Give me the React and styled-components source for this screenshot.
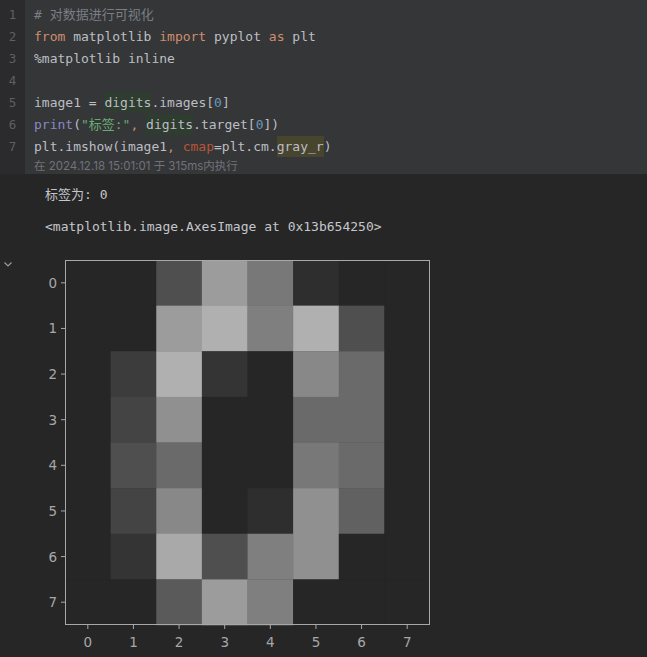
import React from 'react';
import styled, { createGlobalStyle } from 'styled-components';

const digit = [
    [0, 0, 5, 13, 9, 1, 0, 0],
    [0, 0, 13, 15, 10, 15, 5, 0],
    [0, 3, 15, 2, 0, 11, 8, 0],
    [0, 4, 12, 0, 0, 8, 8, 0],
    [0, 5, 8, 0, 0, 9, 8, 0],
    [0, 4, 11, 0, 1, 12, 7, 0],
    [0, 2, 14, 5, 10, 12, 0, 0],
    [0, 0, 6, 13, 10, 0, 0, 0]
];

// grey level per pixel value, read off the rendered gray_r map on the dark theme
const greys = [38, 46, 52, 60, 68, 79, 90, 97, 106, 120, 127, 136, 144, 156, 169, 176];

const Global = createGlobalStyle`
    html, body {
        margin: 0;
        padding: 0;
        background: #262626;
    }
`;

export default function App() {
    return (
        <Page>
            <Global />
            <CodeCell>
                <Gutter>
                    {[1, 2, 3, 4, 5, 6, 7].map((n) => (
                        <LineNumber key={n}>{n}</LineNumber>
                    ))}
                </Gutter>
                <Editor>
                    <CodeLine><Tok kind="comment"># 对数据进行可视化</Tok></CodeLine>
                    <CodeLine>
                        <Tok kind="keyword">from</Tok> matplotlib <Tok kind="keyword">import</Tok> pyplot <Tok kind="keyword">as</Tok> plt
                    </CodeLine>
                    <CodeLine>%matplotlib inline</CodeLine>
                    <CodeLine>{' '}</CodeLine>
                    <CodeLine>
                        image1 = <Mark tone="usage">digits</Mark>.images[<Tok kind="number">0</Tok>]
                    </CodeLine>
                    <CodeLine>
                        <Tok kind="builtin">print</Tok>(<Tok kind="string">"标签:"</Tok><Tok kind="keyword">,</Tok> <Mark tone="usage">digits</Mark>.target[<Tok kind="number">0</Tok>])
                    </CodeLine>
                    <CodeLine>
                        plt.imshow(image1<Tok kind="keyword">,</Tok> <Tok kind="param">cmap</Tok>=plt.cm.<Mark tone="search">gray_r</Mark>)
                    </CodeLine>
                    <Timestamp>在 2024.12.18 15:01:01 于 315ms内执行</Timestamp>
                </Editor>
            </CodeCell>

            <Output>
                <OutText>标签为: 0</OutText>
                <OutText>&lt;matplotlib.image.AxesImage at 0x13b654250&gt;</OutText>
                <PlotRow>
                    <Toggle>
                        <svg width="10" height="10" viewBox="0 0 10 10">
                            <path d="M1.5 3.5 L5 7 L8.5 3.5" fill="none" stroke="#9a9a9a" strokeWidth="1.2" />
                        </svg>
                    </Toggle>
                    <Plot />
                </PlotRow>
            </Output>
        </Page>
    );
}

function Plot() {
    const x0 = 40;
    const y0 = 10;
    const size = 365;
    const cell = size / 8;
    const shade = (v) => `rgb(${greys[v]},${greys[v]},${greys[v]})`;

    return (
        <PlotSvg width="415" height="400" viewBox="0 0 415 400">
            {digit.map((row, r) =>
                row.map((v, c) => (
                    <rect
                        key={`${r}-${c}`}
                        x={x0 + c * cell}
                        y={y0 + r * cell}
                        width={cell + 0.3}
                        height={cell + 0.3}
                        fill={shade(v)}
                    />
                ))
            )}
            <rect x={x0 + 0.5} y={y0 + 0.5} width={size - 1} height={size - 1} fill="none" stroke="#a8a8a8" strokeWidth="1" />
            {[0, 1, 2, 3, 4, 5, 6, 7].map((i) => {
                const c = cell * (i + 0.5);
                return (
                    <g key={i}>
                        <line x1={x0 - 4} x2={x0} y1={y0 + c} y2={y0 + c} stroke="#a8a8a8" />
                        <text x={x0 - 8} y={y0 + c + 5} textAnchor="end">{i}</text>
                        <line x1={x0 + c} x2={x0 + c} y1={y0 + size} y2={y0 + size + 4} stroke="#a8a8a8" />
                        <text x={x0 + c} y={y0 + size + 22} textAnchor="middle">{i}</text>
                    </g>
                );
            })}
        </PlotSvg>
    );
}

const Page = styled.div`
    min-height: 100vh;
    background: #262626;
    font-family: "DejaVu Sans Mono", "Noto Sans CJK SC", monospace;
    font-size: 13px;
    color: #bcbec4;
`;

const CodeCell = styled.div`
    display: flex;
    height: 174px;
`;

const Gutter = styled.div`
    width: 25px;
    background: #2b2b2d;
    padding-top: 4px;
    box-sizing: border-box;
`;

const LineNumber = styled.div`
    height: 22px;
    line-height: 22px;
    text-align: center;
    color: #5c5f66;
    font-size: 12.5px;
`;

const Editor = styled.div`
    flex: 1;
    background: #353638;
    padding: 4px 0 0 9px;
`;

const CodeLine = styled.div`
    height: 22px;
    line-height: 22px;
    white-space: pre;
`;

const tokColors = {
    comment: '#7a7e85',
    keyword: '#cf8e6d',
    number: '#6897bb',
    string: '#6aab73',
    builtin: '#8888c6',
    param: '#b85535'
};

const Tok = styled.span`
    color: ${(p) => tokColors[p.kind]};
`;

const Mark = styled.span`
    background: ${(p) => (p.tone === 'search' ? '#48452f' : '#2f3c30')};
    padding: 3px 0;
`;

const Timestamp = styled.div`
    font-family: Inter, "Noto Sans CJK SC", sans-serif;
    font-size: 11.5px;
    line-height: 16px;
    color: #6f737a;
`;

const Output = styled.div`
    padding-top: 10px;
`;

const OutText = styled.div`
    height: 22px;
    line-height: 22px;
    margin: 0 0 10px 45px;
    white-space: pre;
    color: #c4c6cc;
`;

const PlotRow = styled.div`
    display: flex;
    margin-top: 12px;
`;

const Toggle = styled.div`
    width: 16px;
    padding: 7px 0 0 3px;
    box-sizing: border-box;
    margin-right: 9px;
`;

const PlotSvg = styled.svg`
    display: block;
    font-family: "DejaVu Sans", sans-serif;
    font-size: 13.5px;
    fill: #a8a8a8;
`;
